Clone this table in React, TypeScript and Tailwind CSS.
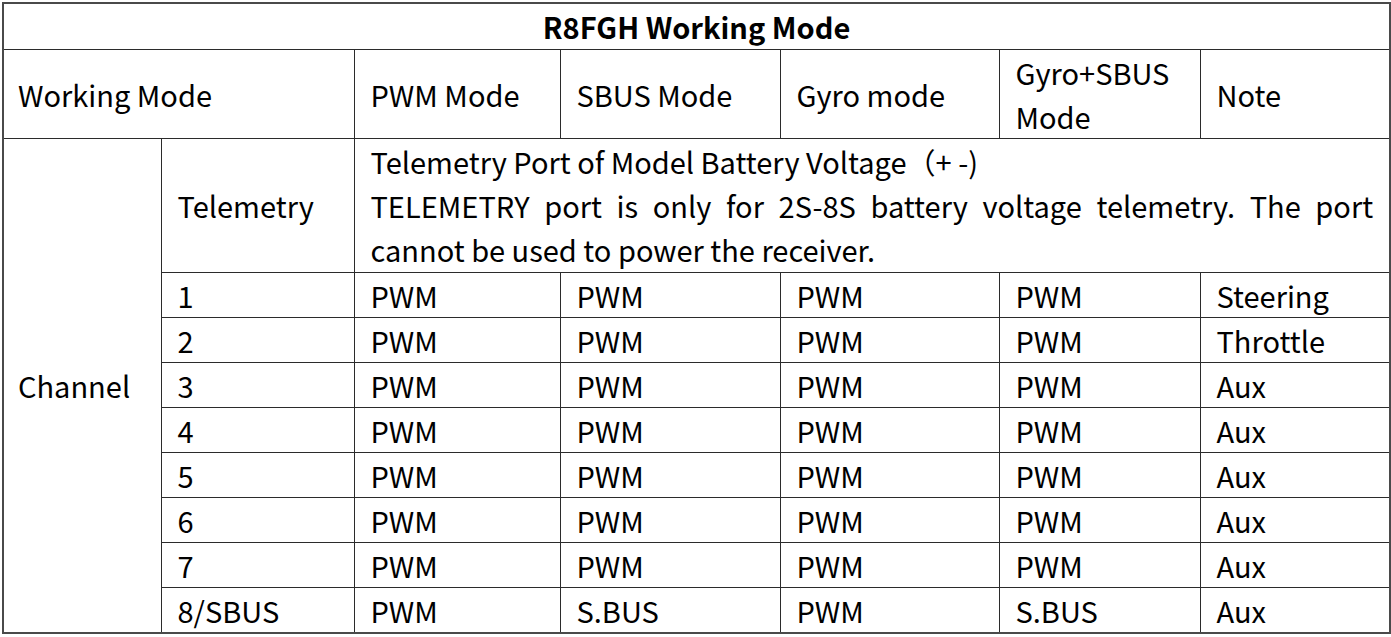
import React from 'react';

const channels = [
  { ch: '1', modes: ['PWM', 'PWM', 'PWM', 'PWM'], note: 'Steering' },
  { ch: '2', modes: ['PWM', 'PWM', 'PWM', 'PWM'], note: 'Throttle' },
  { ch: '3', modes: ['PWM', 'PWM', 'PWM', 'PWM'], note: 'Aux' },
  { ch: '4', modes: ['PWM', 'PWM', 'PWM', 'PWM'], note: 'Aux' },
  { ch: '5', modes: ['PWM', 'PWM', 'PWM', 'PWM'], note: 'Aux' },
  { ch: '6', modes: ['PWM', 'PWM', 'PWM', 'PWM'], note: 'Aux' },
  { ch: '7', modes: ['PWM', 'PWM', 'PWM', 'PWM'], note: 'Aux' },
  { ch: '8/SBUS', modes: ['PWM', 'S.BUS', 'PWM', 'S.BUS'], note: 'Aux' },
];

const cell = 'border border-[#2b2b2b] px-[16px] py-0 text-left align-middle font-normal';
const firstCell = 'border border-[#2b2b2b] pl-[14px] pr-[16px] py-0 text-left align-middle font-normal';

const App: React.FC = () => {
  return (
    <div className="w-[1391px] h-[637px] bg-white overflow-hidden">
      <table
        className="ml-[2px] mt-[2px] w-[1387px] table-fixed border-collapse border-2 border-[#4a4a4a] text-black text-[29px] leading-[44px]"
        style={{ fontFamily: '"Noto Sans CJK SC", "Noto Sans", sans-serif' }}
      >
        <colgroup>
          <col className="w-[158px]" />
          <col className="w-[193px]" />
          <col className="w-[206px]" />
          <col className="w-[220px]" />
          <col className="w-[219px]" />
          <col className="w-[201px]" />
          <col className="w-[190px]" />
        </colgroup>
        <tbody>
          {/* Title */}
          <tr className="h-[46px]">
            <th colSpan={7} className="border border-[#2b2b2b] text-center font-bold align-middle">
              R8FGH Working Mode
            </th>
          </tr>

          {/* Header */}
          <tr className="h-[89px]">
            <td colSpan={2} className={firstCell}>Working Mode</td>
            <td className={cell}>PWM Mode</td>
            <td className={cell}>SBUS Mode</td>
            <td className={cell}>Gyro mode</td>
            <td className={cell}>Gyro+SBUS Mode</td>
            <td className={cell}>Note</td>
          </tr>

          {/* Telemetry */}
          <tr className="h-[134px]">
            <td rowSpan={9} className={firstCell}>Channel</td>
            <td className={cell}>Telemetry</td>
            <td colSpan={5} className={cell}>
              <div>Telemetry Port of Model Battery Voltage（+ -)</div>
              <div className="text-justify">
                TELEMETRY port is only for 2S-8S battery voltage telemetry. The port cannot be used to power the receiver.
              </div>
            </td>
          </tr>

          {channels.map(row => (
            <tr key={row.ch} className="h-[45px]">
              <td className={cell}>{row.ch}</td>
              {row.modes.map((m, i) => (
                <td key={i} className={cell}>{m}</td>
              ))}
              <td className={cell}>{row.note}</td>
            </tr>
          ))}
        </tbody>
      </table>
    </div>
  );
};

export default App;
